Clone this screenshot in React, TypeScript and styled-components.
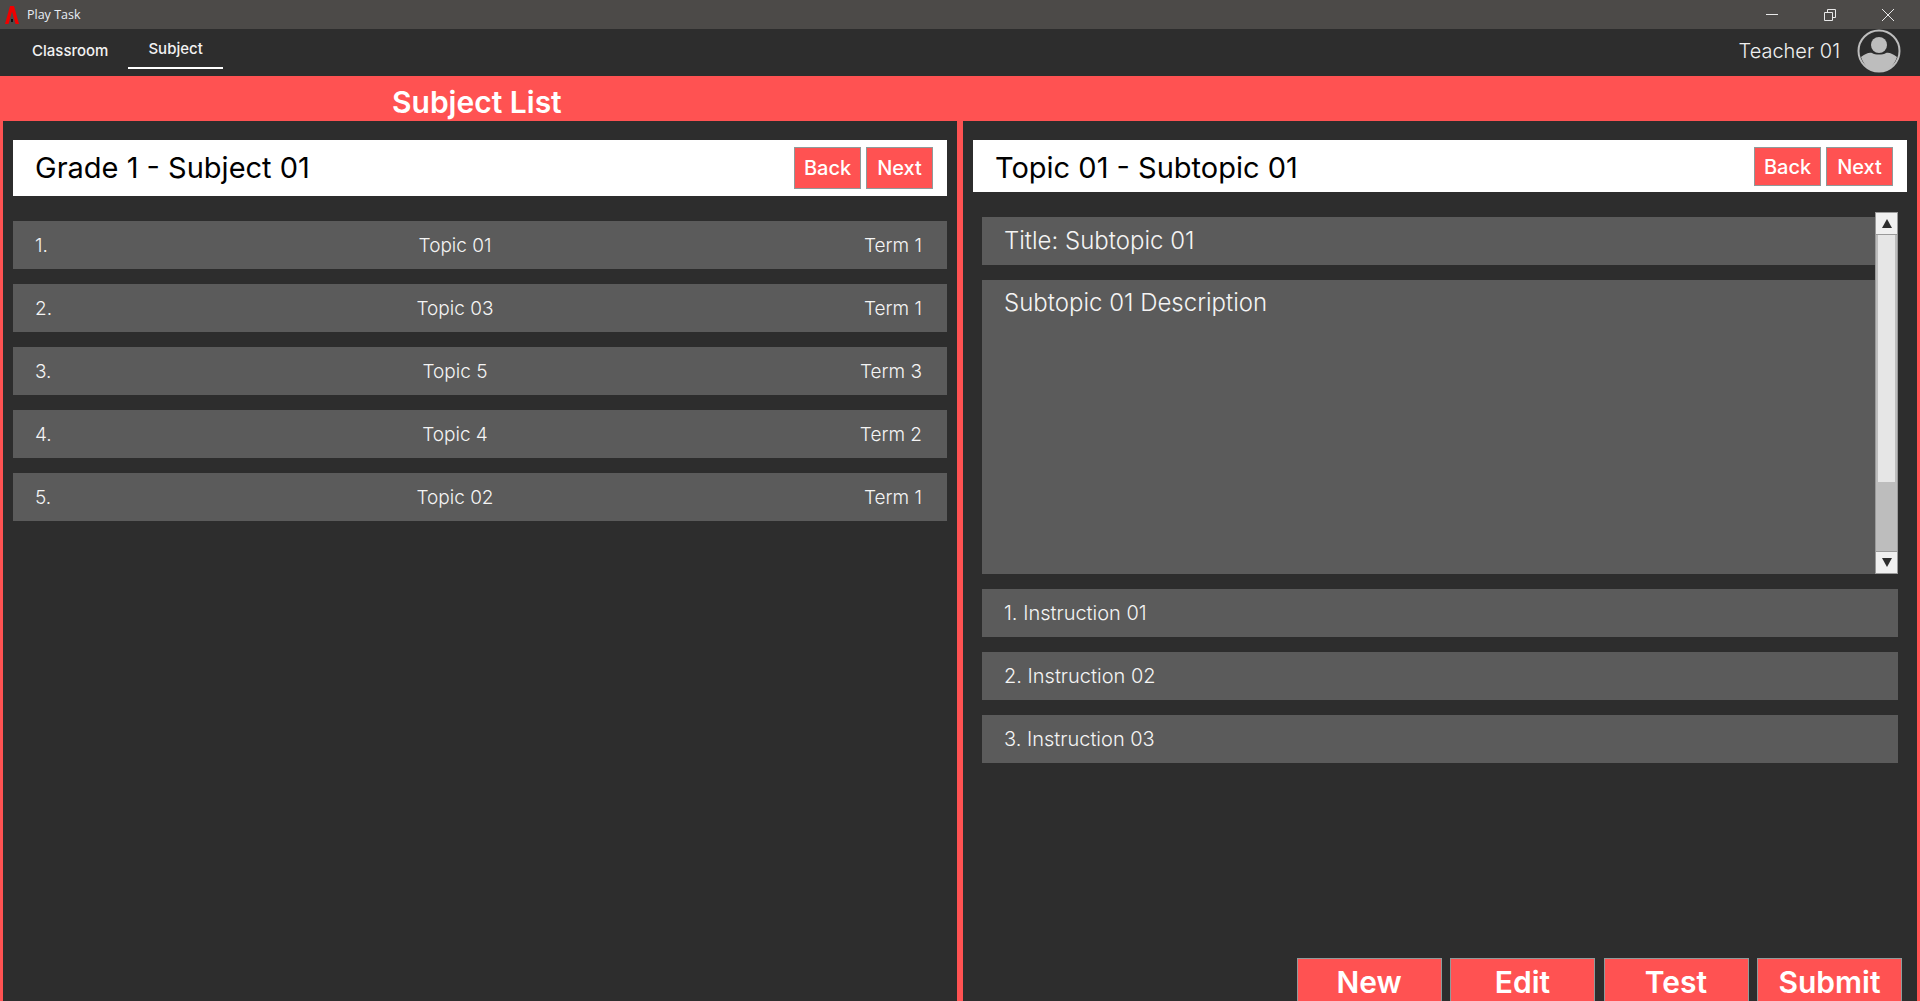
import React from 'react'
import styled, { createGlobalStyle } from 'styled-components'

const GlobalStyle = createGlobalStyle`
  html, body {
    margin: 0;
    padding: 0;
    background: #2d2d2d;
    font-family: Inter, "Liberation Sans", sans-serif;
  }
  * {
    box-sizing: border-box;
  }
`

const Window = styled.div`
  display: flex;
  flex-direction: column;
  width: 100%;
  height: 100vh;
  overflow: hidden;
`

const TitleBar = styled.div`
  display: flex;
  align-items: center;
  flex: 0 0 29px;
  padding-left: 5px;
  background: #4c4a48;
`
const AppName = styled.span`
  margin-left: 8px;
  font-family: "Open Sans", sans-serif;
  font-size: 12.5px;
  color: #e8eef5;
`
const WindowControls = styled.div`
  display: flex;
  margin-left: auto;
  padding-right: 26px;
  gap: 46px;
  svg {
    display: block;
  }
`

const NavBar = styled.div`
  display: flex;
  align-items: flex-start;
  flex: 0 0 47px;
  padding: 0 19px 0 12px;
  background: #2d2d2d;
`
const Tab = styled.div<{ $active?: boolean }>`
  display: flex;
  align-items: center;
  height: ${(p) => (p.$active ? '40px' : '43px')};
  padding: 0 20px;
  font-size: 15px;
  font-weight: 500;
  color: #f2f2f2;
  border-bottom: ${(p) => (p.$active ? '2px solid #fff' : 'none')};
`
const UserBox = styled.div`
  display: flex;
  align-items: center;
  gap: 17px;
  margin-left: auto;
  height: 43px;
`
const UserName = styled.span`
  font-size: 20px;
  font-weight: 300;
  color: #f0f0f0;
`

const Banner = styled.div`
  flex: 0 0 45px;
  padding: 7px 0 0 392px;
  background: #ff5252;
  font-size: 30px;
  line-height: 38px;
  font-weight: 600;
  color: #fff;
`

const Main = styled.div`
  display: grid;
  grid-template-columns: 1fr 1fr;
  gap: 6px;
  flex: 1;
  min-height: 0;
  padding: 0 3px;
  background: #ff5252;
`
const Panel = styled.div`
  display: flex;
  flex-direction: column;
  min-height: 0;
  padding: 19px 10px 0;
  background: #2d2d2d;
`
const PanelHeader = styled.div<{ $height: number }>`
  display: flex;
  align-items: flex-start;
  justify-content: space-between;
  flex: 0 0 ${(p) => p.$height}px;
  padding: 7px 14px 0 22px;
  background: #fff;
`
const HeaderTitle = styled.h2`
  margin: 0;
  font-size: 29px;
  line-height: 42px;
  font-weight: 400;
  color: #000;
`
const HeaderButtons = styled.div`
  display: flex;
  gap: 5px;
`
const SmallButton = styled.button<{ $height: number }>`
  width: 67px;
  height: ${(p) => p.$height}px;
  padding: 0;
  border: 1px solid #8f9a9a;
  background: #ff5252;
  font-family: inherit;
  font-size: 20px;
  font-weight: 500;
  color: #fff;
`

const TopicList = styled.div`
  display: flex;
  flex-direction: column;
  gap: 15px;
  margin-top: 25px;
`
const TopicRow = styled.div`
  display: grid;
  grid-template-columns: 60px 1fr 107px;
  align-items: center;
  height: 48px;
  padding: 0 25px 0 22px;
  background: #5b5b5b;
  font-size: 19px;
  font-weight: 300;
  color: #f4f4f4;
`
const TopicName = styled.span`
  text-align: center;
`
const TopicTerm = styled.span`
  text-align: right;
`

const ContentColumn = styled.div`
  display: flex;
  flex-direction: column;
  padding: 0 9px;
`
const ScrollPane = styled.div`
  display: flex;
  height: 362px;
  margin-top: 20px;
`
const ScrollContent = styled.div`
  display: flex;
  flex-direction: column;
  flex: 1;
  gap: 15px;
  padding-top: 5px;
`
const TitleField = styled.div`
  flex: 0 0 48px;
  padding: 0 22px;
  background: #5b5b5b;
  font-size: 24px;
  line-height: 48px;
  font-weight: 300;
  color: #f4f4f4;
`
const DescriptionField = styled.div`
  flex: 1;
  padding: 7px 22px;
  background: #5b5b5b;
  font-size: 24px;
  line-height: 32px;
  font-weight: 300;
  color: #f4f4f4;
`
const ScrollBar = styled.div`
  display: flex;
  flex-direction: column;
  flex: 0 0 23px;
  border: 1px solid #9a9a9a;
  background: #bdbdbd;
`
const ScrollArrow = styled.div<{ $down?: boolean }>`
  display: flex;
  align-items: center;
  justify-content: center;
  flex: 0 0 22px;
  background: #f0f0f0;
  ${(p) => (p.$down ? 'border-top: 1px solid #9a9a9a;' : 'border-bottom: 1px solid #9a9a9a;')}
  &::before {
    content: '';
    border-left: 5px solid transparent;
    border-right: 5px solid transparent;
    ${(p) => (p.$down ? 'border-top: 9px solid #2d2d2d;' : 'border-bottom: 9px solid #2d2d2d;')}
  }
`
const ScrollTrack = styled.div`
  display: flex;
  flex: 1;
  justify-content: center;
  align-items: flex-start;
`
const ScrollThumb = styled.div`
  width: 17px;
  height: 247px;
  background: #e6e6e6;
`

const InstructionList = styled.div`
  display: flex;
  flex-direction: column;
  gap: 15px;
  margin-top: 15px;
`
const InstructionRow = styled.div`
  height: 48px;
  padding: 0 22px;
  background: #5b5b5b;
  font-size: 20px;
  line-height: 48px;
  font-weight: 300;
  color: #f4f4f4;
`

const Actions = styled.div`
  display: flex;
  flex: 0 0 auto;
  justify-content: flex-end;
  gap: 8.5px;
  margin-top: 195px;
  padding-right: 5px;
`
const ActionButton = styled.button`
  width: 145px;
  height: 60px;
  padding: 0 0 12px;
  border: 1px solid #8f9a9a;
  background: #ff5252;
  font-family: inherit;
  font-size: 30px;
  font-weight: 600;
  color: #fff;
`

const topics = [
  { name: 'Topic 01', term: 'Term 1' },
  { name: 'Topic 03', term: 'Term 1' },
  { name: 'Topic 5', term: 'Term 3' },
  { name: 'Topic 4', term: 'Term 2' },
  { name: 'Topic 02', term: 'Term 1' },
]

const instructions = ['1. Instruction 01', '2. Instruction 02', '3. Instruction 03']

const Logo = () => (
  <svg width="14" height="18" viewBox="0 0 14 18">
    <path d="M5 0H9L14 18H10.5L7 5.5L3.5 18H0Z" fill="#f00000" />
    <rect x="6" y="13" width="2" height="3" fill="#111" />
  </svg>
)

const Avatar = () => (
  <svg width="44" height="44" viewBox="0 0 44 44">
    <circle cx="22" cy="22" r="20.5" fill="none" stroke="#bdbdbd" strokeWidth="2" />
    <circle cx="22" cy="16" r="8" fill="#bdbdbd" />
    <path
      d="M4 28C8 25 12 23 15 24C18 26 26 26 29 24C32 23 36 25 40 28C37 37 30 43 22 43C14 43 7 37 4 28Z"
      fill="#bdbdbd"
    />
  </svg>
)

const App = () => {
  return (
    <Window>
      <GlobalStyle />
      <TitleBar>
        <Logo />
        <AppName>Play Task</AppName>
        <WindowControls>
          <svg width="12" height="12" viewBox="0 0 12 12">
            <path d="M0 5.5H12" stroke="#e8e8e8" fill="none" />
          </svg>
          <svg width="12" height="12" viewBox="0 0 12 12">
            <path d="M0.5 3.5H8.5V11.5H0.5ZM3.5 3.5V0.5H11.5V8.5H8.5" stroke="#e8e8e8" fill="none" />
          </svg>
          <svg width="12" height="12" viewBox="0 0 12 12">
            <path d="M0 0L12 12M12 0L0 12" stroke="#e8e8e8" fill="none" />
          </svg>
        </WindowControls>
      </TitleBar>

      <NavBar>
        <Tab>Classroom</Tab>
        <Tab $active>Subject</Tab>
        <UserBox>
          <UserName>Teacher 01</UserName>
          <Avatar />
        </UserBox>
      </NavBar>

      <Banner>Subject List</Banner>

      <Main>
        <Panel>
          <PanelHeader $height={56}>
            <HeaderTitle>Grade 1 - Subject 01</HeaderTitle>
            <HeaderButtons>
              <SmallButton $height={42}>Back</SmallButton>
              <SmallButton $height={42}>Next</SmallButton>
            </HeaderButtons>
          </PanelHeader>
          <TopicList>
            {topics.map((topic, i) => (
              <TopicRow key={topic.name}>
                <span>{i + 1}.</span>
                <TopicName>{topic.name}</TopicName>
                <TopicTerm>{topic.term}</TopicTerm>
              </TopicRow>
            ))}
          </TopicList>
        </Panel>

        <Panel>
          <PanelHeader $height={52}>
            <HeaderTitle>Topic 01 - Subtopic 01</HeaderTitle>
            <HeaderButtons>
              <SmallButton $height={39}>Back</SmallButton>
              <SmallButton $height={39}>Next</SmallButton>
            </HeaderButtons>
          </PanelHeader>
          <ContentColumn>
            <ScrollPane>
              <ScrollContent>
                <TitleField>Title: Subtopic 01</TitleField>
                <DescriptionField>Subtopic 01 Description</DescriptionField>
              </ScrollContent>
              <ScrollBar>
                <ScrollArrow />
                <ScrollTrack>
                  <ScrollThumb />
                </ScrollTrack>
                <ScrollArrow $down />
              </ScrollBar>
            </ScrollPane>
            <InstructionList>
              {instructions.map((text) => (
                <InstructionRow key={text}>{text}</InstructionRow>
              ))}
            </InstructionList>
          </ContentColumn>
          <Actions>
            <ActionButton>New</ActionButton>
            <ActionButton>Edit</ActionButton>
            <ActionButton>Test</ActionButton>
            <ActionButton>Submit</ActionButton>
          </Actions>
        </Panel>
      </Main>
    </Window>
  )
}

export default App
